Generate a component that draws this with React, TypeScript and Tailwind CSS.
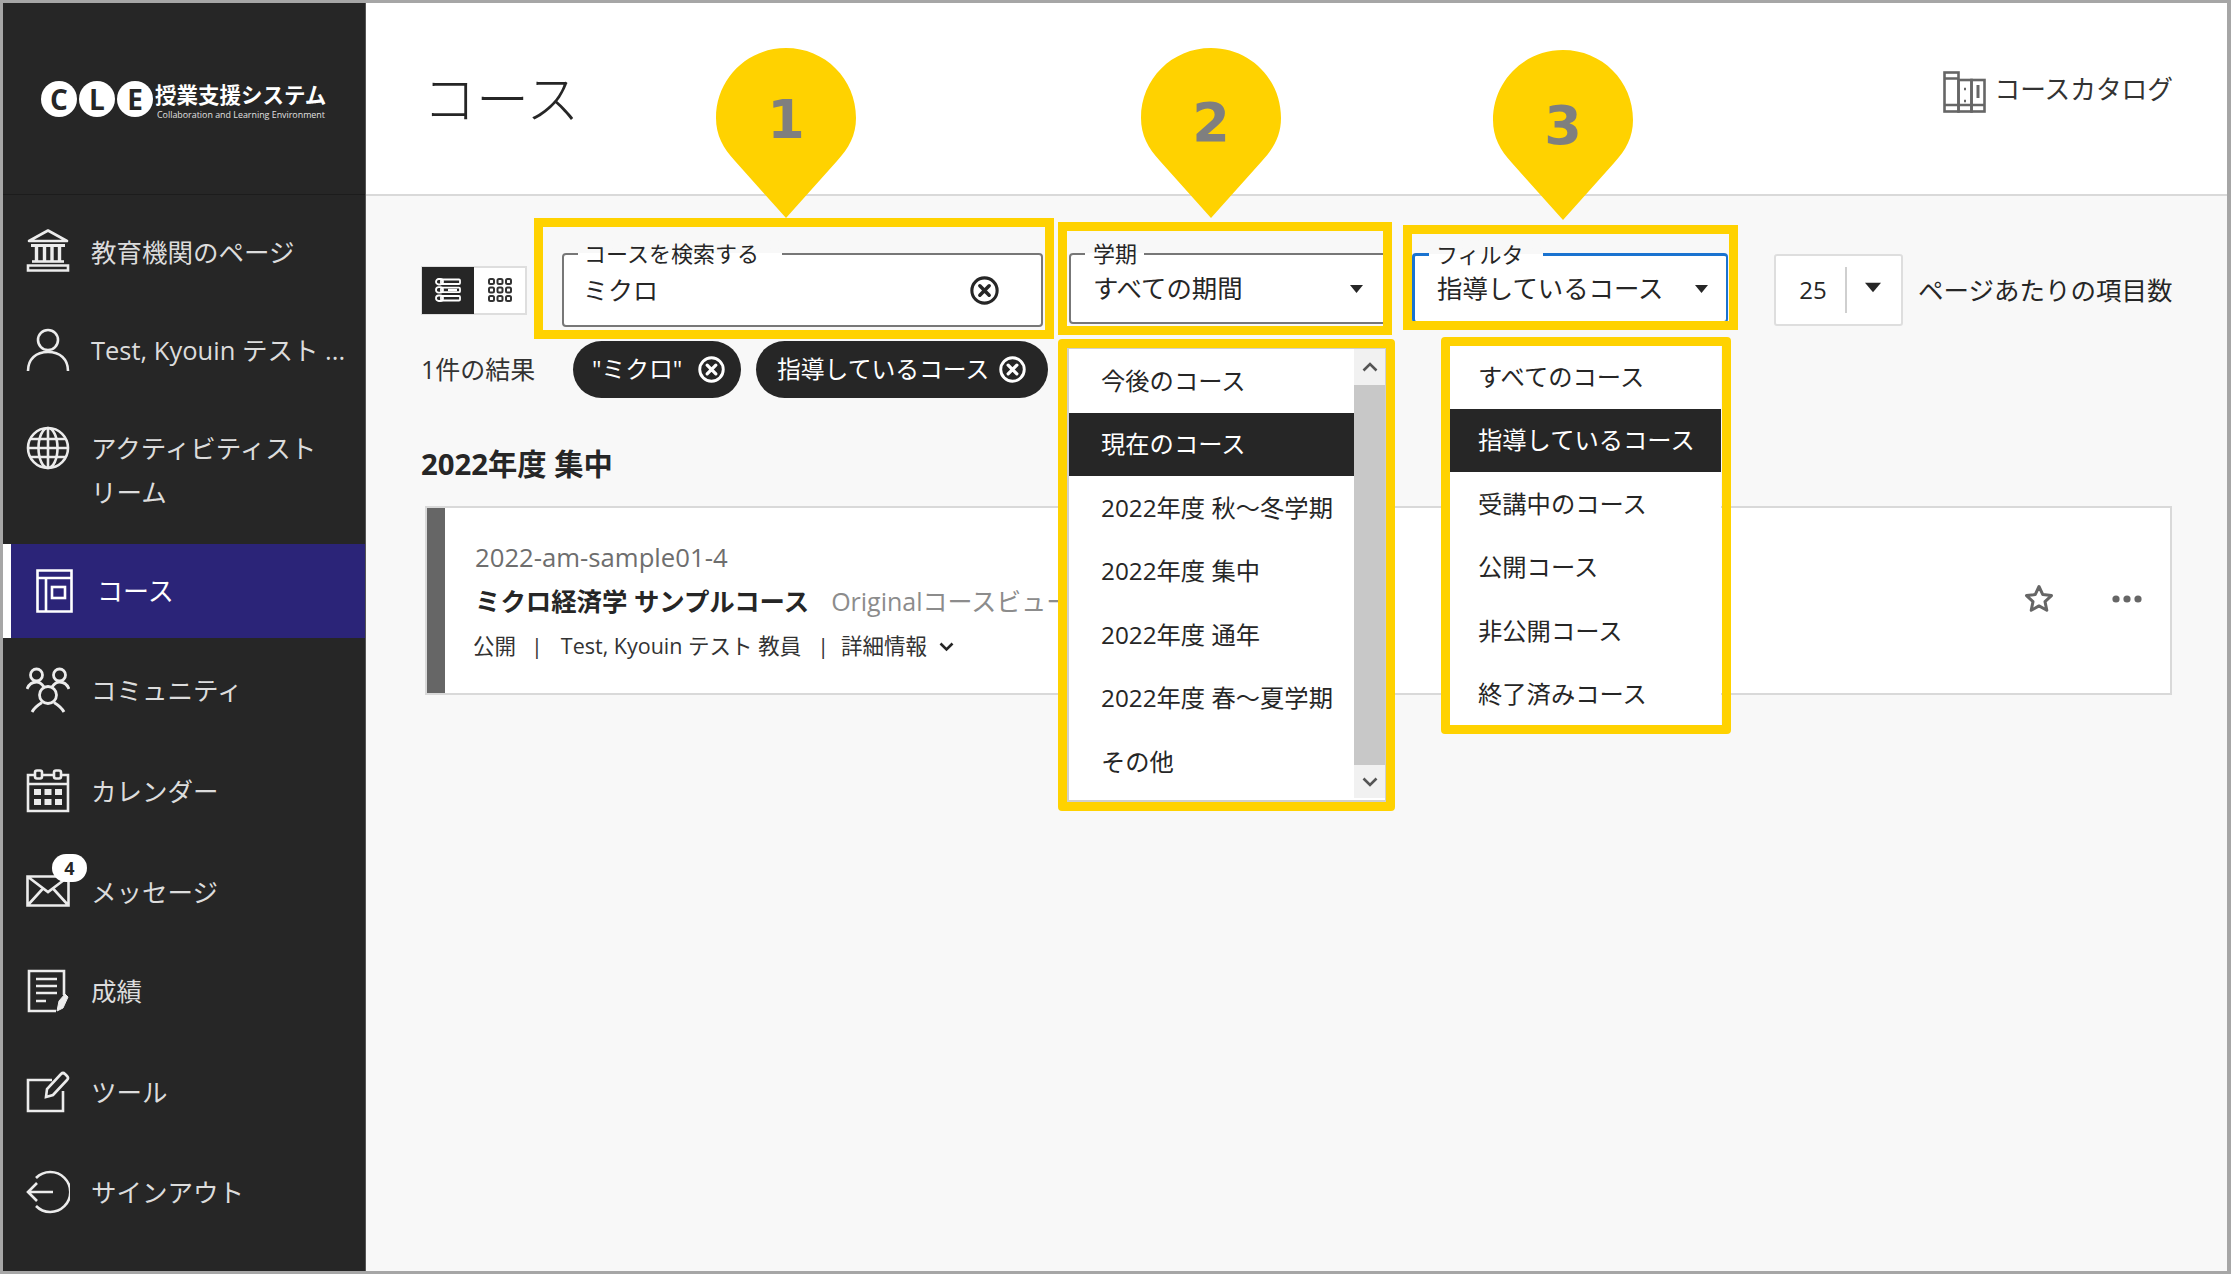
import React from "react";

const S = { fill: "none", stroke: "currentColor", strokeWidth: 2.6 } as const;

const Institution = () => (
  <svg width="44" height="44" viewBox="0 0 44 44" {...S} className="-mt-[4px]">
    <path d="M3 13 L22 2.5 L41 13 Z" strokeLinejoin="round" />
    <path d="M5 17.5 H39" strokeWidth="3" />
    <path d="M10.5 18 V33 M18.5 18 V33 M26 18 V33 M33.5 18 V33" strokeWidth="3.4" />
    <path d="M6 33.5 H38" />
    <path d="M2 37.5 H42 V42.5 H2 Z" />
  </svg>
);
const User = () => (
  <svg width="44" height="44" viewBox="0 0 44 44" {...S}>
    <circle cx="22" cy="12" r="10" />
    <path d="M2 43 C2 31 10 24 22 24 C34 24 42 31 42 43" />
  </svg>
);
const Globe = () => (
  <svg width="44" height="44" viewBox="0 0 44 44" {...S}>
    <circle cx="22" cy="22" r="20" />
    <ellipse cx="22" cy="22" rx="9.5" ry="20" />
    <path d="M22 2 V42 M4 13 H40 M2 22 H42 M4 31 H40" />
  </svg>
);
const Course = () => (
  <svg width="37" height="44" viewBox="0 0 37 44" {...S}>
    <path d="M1.5 1.5 H35.5 V42.5 H1.5 Z M1.5 9 H35.5 M10 9 V42.5" />
    <rect x="16" y="18" width="13" height="11" />
  </svg>
);
const Community = () => (
  <svg width="44" height="46" viewBox="0 0 44 46" {...S} strokeWidth="2.8">
    <circle cx="10.5" cy="8" r="6" />
    <circle cx="33.5" cy="8" r="6" />
    <circle cx="22" cy="28" r="8.5" />
    <path d="M1 22 C3 17 6 15 10.5 15 C14 15 16 17 18 20 M26 20 C28 17 30 15 33.5 15 C38 15 41 17 43 22" />
    <path d="M6 45 C8 41 12 38 16 35.5 M38 45 C36 41 32 38 28 35.5" />
  </svg>
);
const Calendar = () => (
  <svg width="44" height="44" viewBox="0 0 44 44" {...S}>
    <path d="M2 6 H42 V42 H2 Z M2 15 H42" />
    <rect x="9" y="1.5" width="7" height="8" rx="2" fill="#262626" />
    <rect x="28" y="1.5" width="7" height="8" rx="2" fill="#262626" />
    <g fill="currentColor" stroke="none">
      <rect x="8" y="20" width="7" height="6" />
      <rect x="18.5" y="20" width="7" height="6" />
      <rect x="29" y="20" width="7" height="6" />
      <rect x="8" y="30" width="7" height="6" />
      <rect x="18.5" y="30" width="7" height="6" />
      <rect x="29" y="30" width="7" height="6" />
    </g>
  </svg>
);
const Mail = () => (
  <svg width="44" height="32" viewBox="0 0 44 32" {...S}>
    <path d="M1.5 1.5 H42.5 V30.5 H1.5 Z M1.5 1.5 L22 17 L42.5 1.5 M1.5 30.5 L17 13.5 M42.5 30.5 L27 13.5" />
  </svg>
);
const Grade = () => (
  <svg width="42" height="44" viewBox="0 0 42 44" {...S}>
    <path d="M29 42 H2 V2 H37 V26" />
    <path d="M9 10 H30 M9 17 H30 M9 24 H30 M9 32 H19" />
    <path d="M30 42 L32 32 L38 25 L41 28 L36 39 Z" fill="currentColor" strokeWidth="1" />
  </svg>
);
const Tool = () => (
  <svg width="44" height="42" viewBox="0 0 44 42" {...S}>
    <path d="M26 9 H2 V40 H37 V20" />
    <path d="M20 26 L21 18 L35 3 Q37 1 39 3 L41 5 Q43 7 41 9 L27 24 Z" />
  </svg>
);
const SignOut = () => (
  <svg width="44" height="44" viewBox="0 0 44 44" {...S}>
    <path d="M10 8 A20 20 0 1 1 10 36" />
    <path d="M2 22 H27 M11 13 L2 22 L11 31" />
  </svg>
);

const ClearIcon = ({ size, dark }: { size: number; dark?: boolean }) => (
  <svg width={size} height={size} viewBox="0 0 28 28" className={dark ? "text-[#262626]" : "text-white"}>
    <circle cx="14" cy="14" r="12.2" fill="none" stroke="currentColor" strokeWidth="3" />
    <path d="M9.5 9.5 L18.5 18.5 M18.5 9.5 L9.5 18.5" fill="none" stroke="currentColor" strokeWidth="3.4" strokeLinecap="round" />
  </svg>
);

const Caret = ({ w, h }: { w: number; h: number }) => (
  <svg width={w} height={h} viewBox="0 0 10 6" className="text-[#262626]">
    <path d="M0 0 H10 L5 6 Z" fill="currentColor" />
  </svg>
);

const Books = () => (
  <svg width="43" height="42" viewBox="0 0 43 42" fill="none" stroke="#666" strokeWidth="2.6">
    <rect x="1.5" y="1.5" width="14" height="39" />
    <rect x="15.5" y="9" width="13" height="31.5" />
    <rect x="28.5" y="9" width="13" height="31.5" />
    <path d="M1.5 7.5 H15.5 M1.5 34 H41.5 M21 18 H23 M21 30 H23" />
    <path d="M35 14 V27" strokeWidth="3" />
  </svg>
);

const Pin = ({ n, cls, numCls }: { n: string; cls: string; numCls: string }) => (
  <div className={`absolute w-[140px] h-[170px] ${cls}`}>
    <svg width="140" height="170" viewBox="0 0 140 170">
      <path d="M70 170 L19 113 C7 100 0 87 0 70 C0 31 31 0 70 0 C109 0 140 31 140 70 C140 87 133 100 121 113 Z" fill="#ffd200" />
    </svg>
    <span className={`absolute left-0 w-full text-center text-[54px] leading-[64px] font-bold text-[#7f7f7f] font-['DejaVu_Sans',sans-serif] ${numCls}`}>
      {n}
    </span>
  </div>
);

const Row = ({ icon, label, h, badge }: { icon: React.ReactNode; label: string; h: string; badge?: boolean }) => (
  <div className={`flex items-center pl-[23px] gap-[21px] text-[25.5px] leading-[44px] text-[#dcdcdc] ${h}`}>
    <span className="relative w-[44px] flex justify-center text-[#ececec]">
      {icon}
      {badge && (
        <span className="absolute left-[26px] top-[-21px] w-[35px] h-[28px] rounded-full bg-white text-[#262626] text-[18px] leading-[28px] font-bold text-center">
          4
        </span>
      )}
    </span>
    <span className={badge ? "mt-[2px]" : ""}>{label}</span>
  </div>
);

const courses = ["今後のコース", "現在のコース", "2022年度 秋〜冬学期", "2022年度 集中", "2022年度 通年", "2022年度 春〜夏学期", "その他"];
const filters = ["すべてのコース", "指導しているコース", "受講中のコース", "公開コース", "非公開コース", "終了済みコース"];

const Option = ({ text, active, pad }: { text: string; active: boolean; pad: string }) => (
  <div className={`h-[63.5px] flex items-center text-[24.3px] ${pad} ${active ? "bg-[#262626] text-white" : "text-[#262626]"}`}>{text}</div>
);

const Label = ({ text, cls }: { text: string; cls: string }) => (
  <span
    className={`absolute top-[-20px] h-[36px] px-[7px] text-[22px] leading-[36px] text-[#262626] bg-linear-to-b from-[#f8f8f8] from-50% to-white to-50% ${cls}`}
  >
    {text}
  </span>
);

const Circle = ({ c }: { c: string }) => (
  <span className="w-[36px] h-[36px] rounded-full bg-white text-[#262626] font-bold text-[28px] leading-[36px] text-center">{c}</span>
);

export default function App() {
  return (
    <div className="relative w-[2232px] h-[1274px] bg-white overflow-hidden font-['Open_Sans','Noto_Sans_CJK_JP',sans-serif]">
      <div className="w-[2231px] h-[1274px] border-l-[3px] border-t-[3px] border-r-[4px] border-b-[3px] border-[#a6a6a6] flex">
        {/* sidebar */}
        <aside className="w-[363px] shrink-0 bg-[#262626] border-r border-[#555]">
          <div className="h-[192px] border-b border-[#1c1c1c] pl-[38px] pt-[78px] flex items-start text-white">
            <div className="flex gap-[2px]">
              <Circle c="C" />
              <Circle c="L" />
              <Circle c="E" />
            </div>
            <div className="ml-[2px]">
              <div className="text-[21.5px] leading-[28px] font-bold whitespace-nowrap">授業支援システム</div>
              <div className="text-[8.9px] leading-[10px] mt-[1px] ml-[2px] text-[#e0e0e0] whitespace-nowrap">Collaboration and Learning Environment</div>
            </div>
          </div>
          <nav className="flex flex-col">
            <Row icon={<Institution />} label="教育機関のページ" h="h-[100px] mt-[7px]" />
            <Row icon={<User />} label="Test, Kyouin テスト ..." h="h-[96px]" />
            <div className="h-[146px] flex items-start pl-[23px] pt-[28px] gap-[21px] text-[25.5px] leading-[44px] text-[#dcdcdc]">
              <span className="w-[44px] text-[#ececec]"><Globe /></span>
              <span className="w-[240px]">アクティビティストリーム</span>
            </div>
            <div className="h-[94px] flex items-center bg-[#2b2478] border-l-[8px] border-white pl-[25px] gap-[24px] text-[26px] text-white">
              <Course />
              <span>コース</span>
            </div>
            <Row icon={<Community />} label="コミュニティ" h="h-[100px] mt-[2px]" />
            <Row icon={<Calendar />} label="カレンダー" h="h-[101px]" />
            <Row icon={<Mail />} label="メッセージ" h="h-[100px]" badge />
            <Row icon={<Grade />} label="成績" h="h-[100px]" />
            <Row icon={<Tool />} label="ツール" h="h-[101px]" />
            <Row icon={<SignOut />} label="サインアウト" h="h-[100px]" />
          </nav>
        </aside>

        {/* main */}
        <main className="flex-1 flex flex-col min-w-0">
          <header className="h-[193px] shrink-0 bg-white border-b-2 border-[#d9d9d9] flex items-start pl-[57px] pr-[54px] text-[#262626]">
            <h1 className="mt-[63px] text-[53px] leading-[66px] font-light">コース</h1>
            <div className="ml-auto mt-[68px] flex items-center gap-[8px] text-[25.7px] leading-[42px] text-[#333]">
              <span className="flex -ml-[3px]"><Books /></span>
              <span className="-mt-[4px]">コースカタログ</span>
            </div>
          </header>

          <section className="flex-1 bg-[#f8f8f8] pl-[55px] text-[#262626]">
            {/* toolbar */}
            <div className="mt-[57px] h-[74px] flex items-center">
              <div className="w-[106px] h-[49px] flex border-2 border-[#dedede] bg-white">
                <span className="w-[52px] -my-[1px] -ml-[1px] bg-[#262626] flex items-center justify-center text-white">
                  <svg width="26" height="24" viewBox="0 0 26 24" fill="none" stroke="currentColor" strokeWidth="1.8">
                    <rect x="1" y="1" width="7" height="5.5" rx="2.7" />
                    <rect x="1" y="9.2" width="7" height="5.5" rx="2.7" />
                    <rect x="1" y="17.5" width="7" height="5.5" rx="2.7" />
                    <rect x="6" y="1.5" width="19" height="4.5" rx="1" />
                    <rect x="6" y="9.7" width="19" height="4.5" rx="1" />
                    <rect x="6" y="18" width="19" height="4.5" rx="1" />
                    <path d="M13 12 H22" stroke="#fff" strokeWidth="2.4" />
                  </svg>
                </span>
                <span className="flex-1 flex items-center justify-center text-[#333]">
                  <svg width="24" height="24" viewBox="0 0 24 24" fill="none" stroke="currentColor" strokeWidth="2">
                    <rect x="1" y="1" width="5" height="5" rx="1.5" />
                    <rect x="9.5" y="1" width="5" height="5" rx="1.5" />
                    <rect x="18" y="1" width="5" height="5" rx="1.5" />
                    <rect x="1" y="9.5" width="5" height="5" rx="1.5" />
                    <rect x="9.5" y="9.5" width="5" height="5" rx="1.5" />
                    <rect x="18" y="9.5" width="5" height="5" rx="1.5" />
                    <rect x="1" y="18" width="5" height="5" rx="1.5" />
                    <rect x="9.5" y="18" width="5" height="5" rx="1.5" />
                    <rect x="18" y="18" width="5" height="5" rx="1.5" />
                  </svg>
                </span>
              </div>

              <div className="relative ml-[35px] w-[481px] h-[74px] bg-white border-2 border-[#777] rounded-[4px] flex items-center pl-[19px] pr-[42px] text-[25px]">
                <Label text="コースを検索する" cls="left-[14px] w-[204px] pl-[6px]" />
                <span className="mt-[1px]">ミクロ</span>
                <span className="ml-auto flex mt-[1px]"><ClearIcon size={29} dark /></span>
              </div>

              <div className="relative self-start ml-[26px] w-[320px] h-[71px] bg-white border-2 border-[#777] rounded-[4px] flex items-center pl-[22px] pr-[24px] text-[25.4px]">
                <Label text="学期" cls="left-[14px] pl-[8px]" />
                <span>すべての期間</span>
                <span className="ml-auto flex"><Caret w={13} h={8} /></span>
              </div>

              <div className="relative self-start ml-[23px] w-[316px] h-[70px] bg-white border-2 border-t-[3px] border-l-[3px] border-[#1a73d0] rounded-[4px] flex items-center pl-[22px] pr-[18px] text-[25.4px]">
                <Label text="フィルタ" cls="left-[14px] w-[114px]" />
                <span>指導しているコース</span>
                <span className="ml-auto flex"><Caret w={13} h={8} /></span>
              </div>

              <div className="ml-[46px] w-[129px] h-[72px] bg-white border-2 border-[#dedede] rounded-[3px] flex items-center text-[24px]">
                <span className="w-[69px] text-center pl-[5px]">25</span>
                <span className="w-[2px] h-[46px] bg-[#cfcfcf]"></span>
                <span className="flex ml-[18px] -mt-[6px]"><Caret w={16} h={11} /></span>
              </div>

              <span className="ml-[15px] text-[25.5px] whitespace-nowrap">ページあたりの項目数</span>
            </div>

            {/* results */}
            <div className="mt-[14px] h-[57px] flex items-center text-[25px] text-[#333]">
              <span className="w-[152px]">1件の結果</span>
              <span className="w-[168px] h-[57px] rounded-full bg-[#262626] text-white text-[23.8px] flex items-center justify-between pl-[19px] pr-[16px]">
                <span>"ミクロ"</span>
                <ClearIcon size={27} />
              </span>
              <span className="ml-[15px] w-[292px] h-[57px] rounded-full bg-[#262626] text-white text-[23.8px] flex items-center justify-between pl-[21px] pr-[22px] whitespace-nowrap">
                <span>指導しているコース</span>
                <ClearIcon size={27} />
              </span>
            </div>

            {/* section */}
            <h2 className="mt-[49px] text-[29.3px] leading-[34px] font-bold">2022年度 集中</h2>

            <div className="mt-[25px] ml-[4px] w-[1747px] h-[189px] bg-white border-2 border-[#d9d9d9] flex">
              <span className="w-[18px] bg-[#666]"></span>
              <div className="pl-[30px] pt-[28px] whitespace-nowrap">
                <div className="text-[25.7px] leading-[44px] text-[#6e6e6e]">2022-am-sample01-4</div>
                <div className="flex items-center leading-[43px]">
                  <span className="text-[25.4px] font-bold text-[#262626]">ミクロ経済学 サンプルコース</span>
                  <span className="ml-[22px] text-[25px] text-[#8c8c8c]">Originalコースビュー</span>
                </div>
                <div className="flex items-center h-[46px] text-[21.5px] text-[#333] -ml-[2px]">
                  <span>公開</span>
                  <span className="ml-[15px]">|</span>
                  <span className="ml-[18px]">Test, Kyouin テスト 教員</span>
                  <span className="ml-[16px]">|</span>
                  <span className="ml-[12px]">詳細情報</span>
                  <svg className="ml-[12px] mt-[2px]" width="15" height="10" viewBox="0 0 15 10" fill="none" stroke="#262626" strokeWidth="2.6">
                    <path d="M1.5 1.5 L7.5 7.5 L13.5 1.5" />
                  </svg>
                </div>
              </div>
              <div className="ml-auto pr-[28px] flex items-center gap-[58px] -mt-[4px]">
                <span className="flex ml-[1px]">
                  <svg width="30" height="29" viewBox="0 0 30 29" fill="none" stroke="#666" strokeWidth="3" strokeLinejoin="round">
                    <path d="M15 2.5 L18.8 10.6 L27.5 11.6 L21 17.6 L22.8 26.3 L15 21.9 L7.2 26.3 L9 17.6 L2.5 11.6 L11.2 10.6 Z" />
                  </svg>
                </span>
                <svg width="30" height="8" viewBox="0 0 30 8" fill="#666">
                  <circle cx="4" cy="4" r="3.6" />
                  <circle cx="15" cy="4" r="3.6" />
                  <circle cx="26" cy="4" r="3.6" />
                </svg>
              </div>
            </div>
          </section>
        </main>
      </div>

      {/* open dropdown lists */}
      <div className="absolute left-[1067px] top-[347px] w-[320px] h-[455px] bg-white border-2 border-[#cfcfcf] flex">
        <div className="w-[285px]">
          {courses.map((c, i) => (
            <Option key={c} text={c} active={i === 1} pad="pl-[32px]" />
          ))}
        </div>
        <div className="flex-1 flex flex-col bg-[#f1f1f1] h-[449px]">
          <div className="h-[36px] flex items-center justify-center">
            <svg width="16" height="10" viewBox="0 0 16 10" fill="none" stroke="#555" strokeWidth="2.6"><path d="M1.5 8.5 L8 2 L14.5 8.5" /></svg>
          </div>
          <div className="flex-1 bg-[#c8c8c8]"></div>
          <div className="h-[33px] flex items-center justify-center">
            <svg width="16" height="10" viewBox="0 0 16 10" fill="none" stroke="#555" strokeWidth="2.6"><path d="M1.5 1.5 L8 8 L14.5 1.5" /></svg>
          </div>
        </div>
      </div>
      <div className="absolute left-[1450px] top-[345px] w-[271px] h-[381px] bg-white">
        {filters.map((c, i) => (
          <Option key={c} text={c} active={i === 1} pad="pl-[28px]" />
        ))}
      </div>

      {/* annotation frames */}
      <div className="absolute left-[534px] top-[218px] w-[520px] h-[121px] border-[9px] border-[#ffd200]"></div>
      <div className="absolute left-[1058px] top-[222px] w-[334px] h-[113px] border-[9px] border-[#ffd200]"></div>
      <div className="absolute left-[1403px] top-[225px] w-[335px] h-[105px] border-[9px] border-[#ffd200]"></div>
      <div className="absolute left-[1058px] top-[339px] w-[337px] h-[472px] border-[9px] border-[#ffd200] rounded-[4px]"></div>
      <div className="absolute left-[1441px] top-[337px] w-[290px] h-[397px] border-[9px] border-[#ffd200] rounded-[4px]"></div>

      <Pin n="1" cls="left-[716px] top-[48px]" numCls="top-[40px]" />
      <Pin n="2" cls="left-[1141px] top-[48px]" numCls="top-[43px]" />
      <Pin n="3" cls="left-[1493px] top-[50px]" numCls="top-[44px]" />
    </div>
  );
}
